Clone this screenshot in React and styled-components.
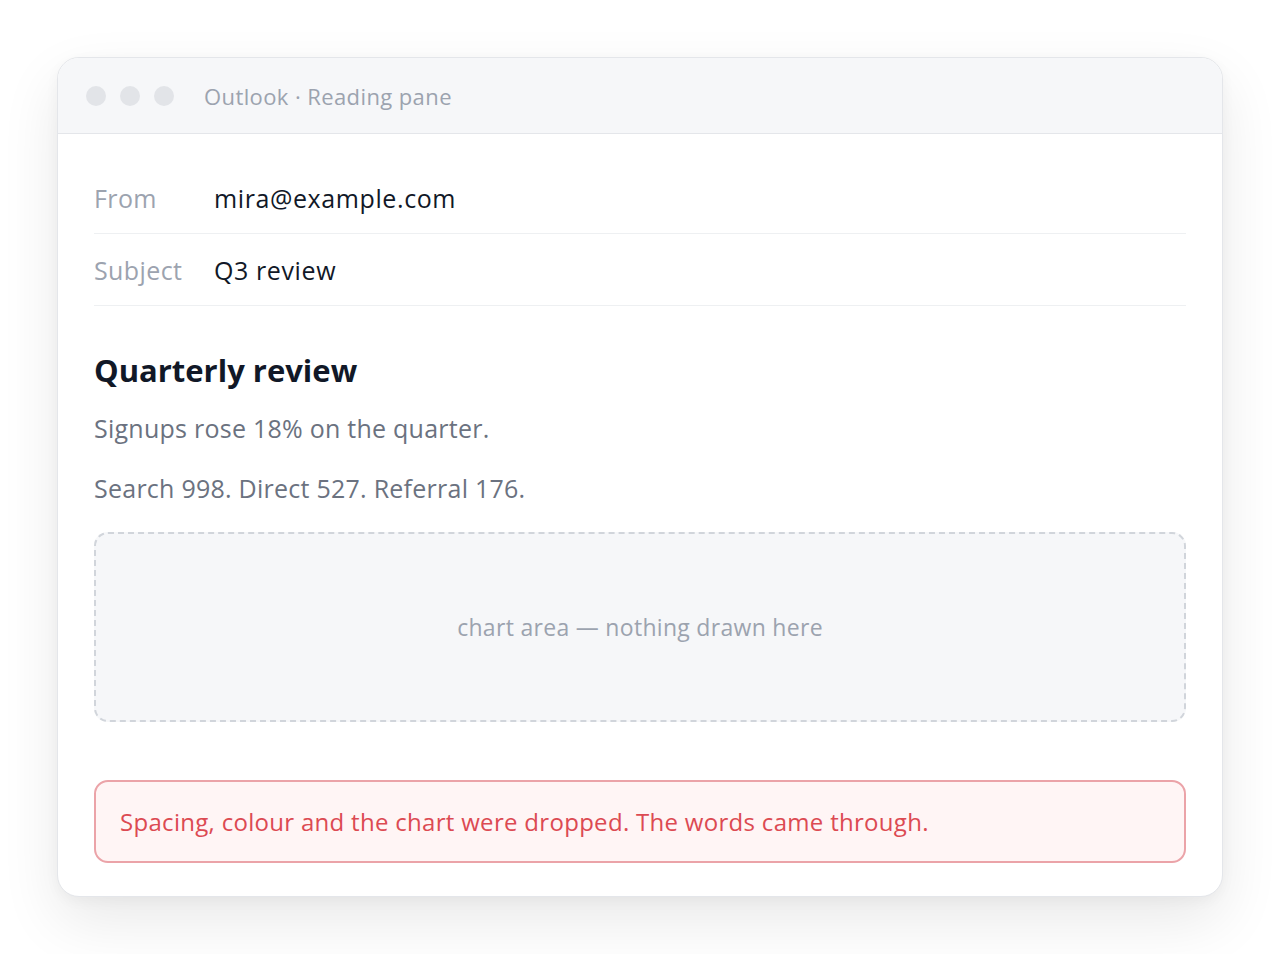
import React from 'react';
import styled, { createGlobalStyle } from 'styled-components';

const GlobalStyle = createGlobalStyle`
  html, body {
    margin: 0;
    padding: 0;
    background: #ffffff;
    font-family: "Open Sans", "Noto Sans", "Liberation Sans", sans-serif;
  }
`;

const Page = styled.div`
  width: 1280px;
  height: 954px;
  padding: 57px 57px 0;
  box-sizing: border-box;
  overflow: hidden;
`;

const Window = styled.div`
  background: #ffffff;
  border: 1px solid #e4e6ea;
  border-radius: 22px;
  box-shadow: 0 24px 60px rgba(0, 0, 0, 0.09), 0 4px 14px rgba(0, 0, 0, 0.04);
  overflow: hidden;
`;

const TitleBar = styled.div`
  height: 75px;
  background: #f6f7f9;
  border-bottom: 1px solid #e4e6ea;
  display: flex;
  align-items: center;
  padding-left: 28px;
  gap: 14px;
`;

const Dot = styled.span`
  width: 20px;
  height: 20px;
  border-radius: 50%;
  background: #e2e4e8;
`;

const Title = styled.div`
  margin-left: 16px;
  font-size: 22px;
  letter-spacing: 0.4px;
  color: #9ca3af;
`;

const Body = styled.div`
  padding: 26px 36px 33px;
`;

const Row = styled.div`
  display: flex;
  align-items: center;
  height: 71px;
  border-bottom: 1px solid #eef0f2;
  padding-top: ${(p) => (p.first ? '2px' : '0')};
`;

const Label = styled.div`
  width: 120px;
  font-size: 25px;
  letter-spacing: 0.4px;
  color: #9ca3af;
`;

const Value = styled.div`
  font-size: 25px;
  letter-spacing: 0.6px;
  color: #111827;
`;

const Heading = styled.h1`
  margin: 42px 0 0;
  font-size: 31px;
  font-weight: 700;
  color: #111827;
  line-height: 44px;
`;

const Para = styled.p`
  margin: ${(p) => (p.first ? '14px' : '16px')} 0 0;
  font-size: 25px;
  letter-spacing: 0.25px;
  line-height: 44px;
  color: #6b7280;
`;

const Chart = styled.div`
  margin-top: 22px;
  height: 190px;
  box-sizing: border-box;
  border: 2px dashed #d1d5db;
  border-radius: 14px;
  background: #f6f7f9;
  display: flex;
  align-items: center;
  justify-content: center;
  font-size: 23px;
  letter-spacing: 0.3px;
  color: #9ca3af;
`;

const Alert = styled.div`
  margin-top: 58px;
  height: 83px;
  box-sizing: border-box;
  border: 2px solid #eba3a8;
  border-radius: 14px;
  background: #fff5f5;
  display: flex;
  align-items: center;
  padding-left: 24px;
  font-size: 24px;
  letter-spacing: 0.3px;
  color: #dc4a52;
`;

export default function App() {
  return (
    <>
      <GlobalStyle />
      <Page>
        <Window>
          <TitleBar>
            <Dot />
            <Dot />
            <Dot />
            <Title>Outlook · Reading pane</Title>
          </TitleBar>
          <Body>
            <Row first>
              <Label>From</Label>
              <Value>mira@example.com</Value>
            </Row>
            <Row>
              <Label>Subject</Label>
              <Value>Q3 review</Value>
            </Row>
            <Heading>Quarterly review</Heading>
            <Para first>Signups rose 18% on the quarter.</Para>
            <Para>Search 998. Direct 527. Referral 176.</Para>
            <Chart>chart area — nothing drawn here</Chart>
            <Alert>Spacing, colour and the chart were dropped. The words came through.</Alert>
          </Body>
        </Window>
      </Page>
    </>
  );
}
